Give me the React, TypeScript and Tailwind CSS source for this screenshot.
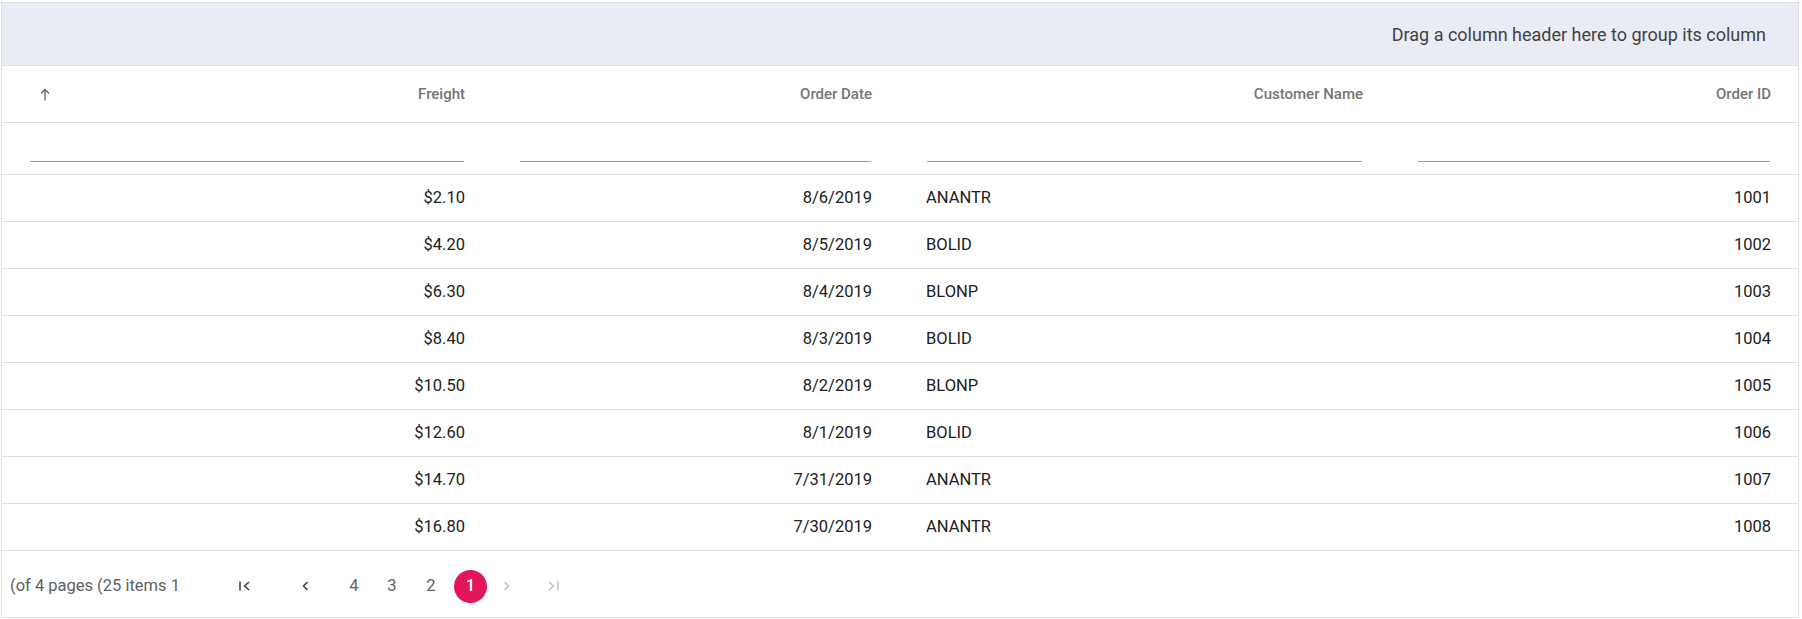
import React from "react";

type Order = {
  freight: string;
  date: string;
  customer: string;
  id: number;
};

const orders: Order[] = [
  { freight: "$2.10", date: "8/6/2019", customer: "ANANTR", id: 1001 },
  { freight: "$4.20", date: "8/5/2019", customer: "BOLID", id: 1002 },
  { freight: "$6.30", date: "8/4/2019", customer: "BLONP", id: 1003 },
  { freight: "$8.40", date: "8/3/2019", customer: "BOLID", id: 1004 },
  { freight: "$10.50", date: "8/2/2019", customer: "BLONP", id: 1005 },
  { freight: "$12.60", date: "8/1/2019", customer: "BOLID", id: 1006 },
  { freight: "$14.70", date: "7/31/2019", customer: "ANANTR", id: 1007 },
  { freight: "$16.80", date: "7/30/2019", customer: "ANANTR", id: 1008 },
];

const cols = "grid grid-cols-[490px_407px_491px_408px]";

const FirstIcon = ({ className }: { className?: string }) => (
  <svg className={className} width="12" height="10" viewBox="0 0 12 10" fill="none">
    <path d="M1 0.5V9.5" stroke="currentColor" strokeWidth="1.6" />
    <path d="M10 1L5.5 5L10 9" stroke="currentColor" strokeWidth="1.6" />
  </svg>
);

const LastIcon = ({ className }: { className?: string }) => (
  <svg className={className} width="12" height="10" viewBox="0 0 12 10" fill="none">
    <path d="M11 0.5V9.5" stroke="currentColor" strokeWidth="1.6" />
    <path d="M2 1L6.5 5L2 9" stroke="currentColor" strokeWidth="1.6" />
  </svg>
);

const PrevIcon = ({ className }: { className?: string }) => (
  <svg className={className} width="7" height="10" viewBox="0 0 7 10" fill="none">
    <path d="M5.5 1L1.5 5L5.5 9" stroke="currentColor" strokeWidth="1.6" />
  </svg>
);

const NextIcon = ({ className }: { className?: string }) => (
  <svg className={className} width="7" height="10" viewBox="0 0 7 10" fill="none">
    <path d="M1.5 1L5.5 5L1.5 9" stroke="currentColor" strokeWidth="1.6" />
  </svg>
);

const SortUpIcon = () => (
  <svg width="10" height="13" viewBox="0 0 10 13" fill="none" className="text-[#616161]">
    <path d="M5 12.5V1.5" stroke="currentColor" strokeWidth="1.3" />
    <path d="M1 5.5L5 1.5L9 5.5" stroke="currentColor" strokeWidth="1.3" />
  </svg>
);

export default function App() {
  return (
    <div className="min-h-screen bg-white pt-[2px] pl-[1px] font-['Roboto',sans-serif]">
      <div className="w-[1798px] border border-[#e0e0e0]">
        {/* group drop area */}
        <div className="flex h-[63px] items-center justify-end border-b border-[#e0e0e0] bg-[#e9ebf5] pr-[32px] text-[18px] text-[#424242]">
          Drag a column header here to group its column
        </div>

        {/* header */}
        <div className={`${cols} h-[57px] items-center border-b border-[#e0e0e0] text-[15px] font-medium text-[#757575]`}>
          <div className="flex items-center justify-between pl-[38px] pr-[27px]">
            <SortUpIcon />
            <span>Freight</span>
          </div>
          <div className="px-[27px] text-right">Order Date</div>
          <div className="px-[27px] text-right">Customer Name</div>
          <div className="px-[27px] text-right">Order ID</div>
        </div>

        {/* filter bar */}
        <div className={`${cols} h-[52px] border-b border-[#e0e0e0]`}>
          {[0, 1, 2, 3].map((i) => (
            <div key={i} className="px-[28px] pt-[38px]">
              <div className="h-px bg-[#9e9e9e]" />
            </div>
          ))}
        </div>

        {/* rows */}
        {orders.map((o) => (
          <div
            key={o.id}
            className={`${cols} h-[47px] items-center border-b border-[#e0e0e0] text-[16.5px] text-[#212121]`}
          >
            <div className="px-[27px] text-right">{o.freight}</div>
            <div className="px-[27px] text-right">{o.date}</div>
            <div className="px-[27px] text-left">{o.customer}</div>
            <div className="px-[27px] text-right">{o.id}</div>
          </div>
        ))}

        {/* pager */}
        <div className="flex h-[66px] items-center pt-[4px] text-[16.5px]">
          <span className="ml-[8px] w-[229px] text-[#616161]">(of 4 pages (25 items 1</span>
          <FirstIcon className="text-[#424242]" />
          <PrevIcon className="ml-[51px] text-[#424242]" />
          <div className="ml-[37px] flex items-center text-[#616161]">
            <span className="w-[16px] text-center">4</span>
            <span className="ml-[22px] w-[16px] text-center">3</span>
            <span className="ml-[23px] w-[16px] text-center">2</span>
            <span className="ml-[15px] flex h-[33px] w-[33px] items-center justify-center rounded-full bg-[#e3165b] font-medium text-white">
              1
            </span>
          </div>
          <NextIcon className="ml-[16px] text-[#c2c2c2]" />
          <LastIcon className="ml-[37px] text-[#c2c2c2]" />
        </div>
      </div>
    </div>
  );
}
